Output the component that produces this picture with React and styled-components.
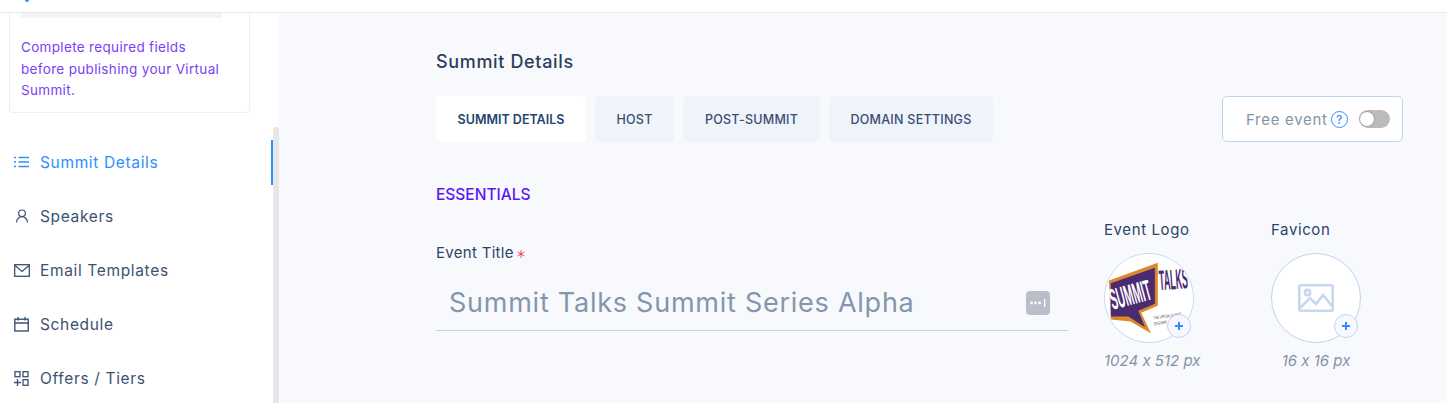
import React from 'react';
import styled, { createGlobalStyle } from 'styled-components';
import { UserRound, Asterisk } from 'lucide-react';

const GlobalStyle = createGlobalStyle`
    html, body {
        margin: 0;
        height: 403px;
        overflow: hidden;
        background: #f8f9fd;
        font-family: "Inter", "Noto Sans", sans-serif;
        font-feature-settings: "calt" 0;
    }
    * {
        box-sizing: border-box;
    }
`;

const ListIcon = () => (
    <svg width="16" height="12" viewBox="0 0 16 12" fill="none" stroke="currentColor" strokeWidth="1.3">
        <path d="M0 1.5h2M0 6h2M0 10.5h2" />
        <path d="M4.5 1.5H15M4.5 6H15M4.5 10.5H15" />
    </svg>
);

const MailIcon = () => (
    <svg width="16" height="13" viewBox="0 0 16 13" fill="none" stroke="currentColor" strokeWidth="1.3">
        <rect x="0.7" y="0.7" width="14.6" height="11.6" />
        <path d="M1 1.5l7 6 7-6" />
    </svg>
);

const CalendarIcon = () => (
    <svg width="15" height="15" viewBox="0 0 15 15" fill="none" stroke="currentColor" strokeWidth="1.4">
        <rect x="0.8" y="2.2" width="13.4" height="11.8" />
        <path d="M1 6h13M4 0v3.5M11 0v3.5" />
    </svg>
);

const OffersIcon = () => (
    <svg width="15" height="15" viewBox="0 0 15 15" fill="none" stroke="currentColor" strokeWidth="1.3">
        <rect x="1" y="0.7" width="5" height="5" />
        <rect x="9" y="0.7" width="5" height="5" />
        <rect x="9" y="8.7" width="5" height="5.6" />
        <path d="M3.5 8v7M0 11.5h7" />
    </svg>
);

const navItems = [
    { label: 'Summit Details', icon: <ListIcon />, active: true },
    { label: 'Speakers', icon: <UserRound size={16} strokeWidth={1.8} /> },
    { label: 'Email Templates', icon: <MailIcon /> },
    { label: 'Schedule', icon: <CalendarIcon /> },
    { label: 'Offers / Tiers', icon: <OffersIcon /> },
];

const tabs = [
    { label: 'SUMMIT DETAILS', width: 150, active: true },
    { label: 'HOST', width: 79 },
    { label: 'POST-SUMMIT', width: 137 },
    { label: 'DOMAIN SETTINGS', width: 164 },
];

const PlusBadge = () => (
    <Plus>
        <svg width="10" height="10" viewBox="0 0 10 10" stroke="#2e8fff" strokeWidth="2">
            <path d="M5 1v8M1 5h8" />
        </svg>
    </Plus>
);

const SummitLogo = () => (
    <svg width="90" height="90" viewBox="0 0 90 90" fontFamily="Liberation Sans">
        <rect width="90" height="90" fill="#fff" />
        <polygon points="4,27 54,9 54,53 37,60 47,81 26,69 6,67" fill="#d98a2b" />
        <polygon points="6,30 51,14 51,51 34,58 41,75 24,64 6,64" fill="#4a2a70" />
        <text fontWeight="700" fontSize="30" fill="#fff" transform="translate(8 57) rotate(-15) scale(0.36 1)">SUMMIT</text>
        <text fontWeight="700" fontSize="29" fill="#4a2a70" transform="translate(56 37) rotate(-4) scale(0.31 1)">TALKS</text>
        <text fontSize="4.5" fill="#444" transform="translate(50 67) rotate(-8) scale(0.6 1)">THE VIRTUAL SUMMIT</text>
        <text fontSize="4.5" fill="#444" transform="translate(50 73) rotate(-8) scale(0.6 1)">ON EVERY</text>
    </svg>
);

const App = () => {
    return (
        <Page>
            <GlobalStyle />
            <TopBar>
                <TopMark />
            </TopBar>
            <Body>
                <Sidebar>
                    <Notice>
                        <NoticeBar />
                        <NoticeText>Complete required fields before publishing your Virtual Summit.</NoticeText>
                    </Notice>
                    <Nav>
                        {navItems.map((item) => (
                            <NavItem key={item.label} $active={item.active}>
                                <NavIcon>{item.icon}</NavIcon>
                                {item.label}
                            </NavItem>
                        ))}
                    </Nav>
                    <ScrollThumb />
                    <ActiveMark />
                </Sidebar>
                <Main>
                    <Title>Summit Details</Title>
                    <TabRow>
                        <Tabs>
                            {tabs.map((tab) => (
                                <Tab key={tab.label} $active={tab.active} $width={tab.width}>{tab.label}</Tab>
                            ))}
                        </Tabs>
                        <FreeBox>
                            <FreeLabel>Free event</FreeLabel>
                            <Help>?</Help>
                            <Toggle />
                        </FreeBox>
                    </TabRow>
                    <Section>ESSENTIALS</Section>
                    <Fields>
                        <TitleField>
                            <FieldLabel>
                                Event Title
                                <Star><Asterisk size={14} strokeWidth={1.5} /></Star>
                            </FieldLabel>
                            <InputRow>
                                <InputText>Summit Talks Summit Series Alpha</InputText>
                                <DotsButton>
                                    <svg width="18" height="8" viewBox="0 0 18 8" fill="#fff">
                                        <circle cx="2.5" cy="4" r="1.4" />
                                        <circle cx="6.5" cy="4" r="1.4" />
                                        <circle cx="10.5" cy="4" r="1.4" />
                                        <rect x="15" y="0" width="1.4" height="8" />
                                    </svg>
                                </DotsButton>
                            </InputRow>
                        </TitleField>
                        <Upload $width={167}>
                            <UploadLabel>Event Logo</UploadLabel>
                            <Circle>
                                <CircleClip><SummitLogo /></CircleClip>
                                <PlusBadge />
                            </Circle>
                            <SizeHint $align="flex-start">1024 x 512 px</SizeHint>
                        </Upload>
                        <Upload $width={90}>
                            <UploadLabel>Favicon</UploadLabel>
                            <Circle>
                                <CircleClip>
                                    <svg width="36" height="28" viewBox="0 0 36 28" fill="none" stroke="#c5d8f0" strokeWidth="2.6">
                                        <rect x="1.3" y="1.3" width="33.4" height="25.4" rx="1" />
                                        <circle cx="9.5" cy="8.5" r="2.6" />
                                        <path d="M2 24l10-10 6 6 7-9 9 11" />
                                    </svg>
                                </CircleClip>
                                <PlusBadge />
                            </Circle>
                            <SizeHint $align="center">16 x 16 px</SizeHint>
                        </Upload>
                    </Fields>
                </Main>
            </Body>
        </Page>
    );
};

const Page = styled.div`
    height: 403px;
    overflow: hidden;
    display: flex;
    flex-direction: column;
`;

const TopBar = styled.div`
    position: relative;
    height: 13px;
    flex-shrink: 0;
    overflow: hidden;
    background: #fff;
    border-bottom: 1px solid #e1ebf7;
`;

const TopMark = styled.span`
    position: absolute;
    left: 25px;
    top: -4px;
    width: 4px;
    height: 6px;
    border-radius: 2px;
    background: #2e8fff;
`;

const Body = styled.div`
    flex: 1;
    display: flex;
    min-height: 0;
`;

const Sidebar = styled.aside`
    position: relative;
    width: 279px;
    flex-shrink: 0;
    background: #fff;
    padding-left: 9px;
`;

const Notice = styled.div`
    width: 241px;
    height: 100px;
    padding: 0 11px;
    background: #fff;
    border: 1px solid #eeeff2;
    border-top: 0;
    border-radius: 0 0 3px 3px;
`;

const NoticeBar = styled.div`
    width: 201px;
    height: 5px;
    background: #f4f4f5;
`;

const NoticeText = styled.p`
    margin: 19px 0 0;
    width: 205px;
    font-size: 13.5px;
    line-height: 21.5px;
    letter-spacing: 0.33px;
    color: #7a3ff5;
`;

const Nav = styled.nav`
    margin: 22px 0 0 -9px;
`;

const NavItem = styled.div`
    height: 54px;
    display: flex;
    align-items: center;
    padding-left: 13px;
    font-size: 15.5px;
    letter-spacing: 0.65px;
    color: ${(p) => (p.$active ? '#2e8fff' : '#3b5272')};
`;

const NavIcon = styled.span`
    width: 27px;
    padding-left: 1px;
    display: flex;
    align-items: center;
`;

const ScrollThumb = styled.div`
    position: absolute;
    top: 114px;
    right: 0;
    bottom: 0;
    width: 6px;
    border-radius: 3px 3px 0 0;
    background: #e6e6e6;
`;

const ActiveMark = styled.div`
    position: absolute;
    top: 127px;
    left: 271px;
    width: 2px;
    height: 45px;
    background: #2e8fff;
`;

const Main = styled.main`
    flex: 1;
    min-width: 0;
    padding: 38px 44px 0 157px;
`;

const Title = styled.h1`
    margin: 0;
    font-size: 18px;
    line-height: 22px;
    font-weight: 500;
    letter-spacing: 0.65px;
    color: #2c3e58;
`;

const TabRow = styled.div`
    margin-top: 23px;
    display: flex;
    justify-content: space-between;
`;

const Tabs = styled.div`
    display: flex;
    gap: 9px;
`;

const Tab = styled.div`
    width: ${(p) => p.$width}px;
    height: 46px;
    display: flex;
    align-items: center;
    justify-content: center;
    border-radius: 5px;
    font-size: 12.5px;
    font-weight: ${(p) => (p.$active ? 600 : 500)};
    letter-spacing: ${(p) => (p.$active ? '0' : '0.25px')};
    color: ${(p) => (p.$active ? '#24456f' : '#3a4d73')};
    background: ${(p) => (p.$active ? '#fff' : '#eff3fa')};
`;

const FreeBox = styled.div`
    width: 181px;
    height: 46px;
    display: flex;
    align-items: center;
    padding: 0 12px 0 23px;
    background: #fff;
    border: 1px solid #bcd4f0;
    border-radius: 5px;
`;

const FreeLabel = styled.span`
    font-size: 15px;
    letter-spacing: 0.7px;
    color: #8494a8;
`;

const Help = styled.span`
    width: 17px;
    height: 17px;
    margin-left: 3px;
    border: 1.5px solid #2e8fff;
    border-radius: 50%;
    display: flex;
    align-items: center;
    justify-content: center;
    font-size: 12px;
    font-weight: 500;
    color: #2e8fff;
`;

const Toggle = styled.span`
    position: relative;
    width: 31px;
    height: 18px;
    margin-left: auto;
    border-radius: 9px;
    background: #bbb;
    &::after {
        content: '';
        position: absolute;
        left: 1px;
        top: 2px;
        width: 14px;
        height: 14px;
        border-radius: 50%;
        background: #fff;
        box-shadow: 0 0 2px rgba(0, 0, 0, 0.4);
    }
`;

const Section = styled.h2`
    margin: 43px 0 0;
    font-size: 15.5px;
    line-height: 20px;
    font-weight: 500;
    color: #5b17f5;
`;

const Fields = styled.div`
    display: flex;
    margin-top: 15px;
`;

const TitleField = styled.div`
    width: 632px;
    margin-right: 36px;
    padding-top: 23px;
`;

const FieldLabel = styled.label`
    display: flex;
    align-items: center;
    font-size: 15px;
    line-height: 20px;
    letter-spacing: 0.3px;
    color: #2c4468;
`;

const Star = styled.span`
    display: flex;
    margin: 1px 0 0 0;
    color: #f0304a;
`;

const InputRow = styled.div`
    margin-top: 22px;
    height: 46px;
    padding: 0 18px 10px 13px;
    display: flex;
    align-items: center;
    justify-content: space-between;
    border-bottom: 1px solid #bcd4f0;
`;

const InputText = styled.span`
    font-size: 27px;
    letter-spacing: 0.75px;
    color: #8496ae;
`;

const DotsButton = styled.span`
    width: 24px;
    height: 24px;
    display: flex;
    align-items: center;
    justify-content: center;
    border-radius: 4px;
    background: #b8bfca;
`;

const Upload = styled.div`
    width: ${(p) => p.$width}px;
`;

const UploadLabel = styled.div`
    font-size: 15px;
    line-height: 20px;
    letter-spacing: 0.6px;
    color: #2c4468;
`;

const Circle = styled.div`
    position: relative;
    width: 90px;
    height: 90px;
    margin-top: 13px;
`;

const CircleClip = styled.div`
    width: 90px;
    height: 90px;
    display: flex;
    align-items: center;
    justify-content: center;
    overflow: hidden;
    background: #fff;
    border: 1px solid #bcd4f0;
    border-radius: 50%;
`;

const Plus = styled.span`
    position: absolute;
    right: 3px;
    bottom: 5px;
    width: 24px;
    height: 24px;
    display: flex;
    align-items: center;
    justify-content: center;
    border-radius: 50%;
    background: #f8f7ff;
    border: 1px solid #bcd4f0;
`;

const SizeHint = styled.div`
    width: 90px;
    margin-top: 8px;
    font-size: 15px;
    line-height: 20px;
    font-style: italic;
    white-space: nowrap;
    color: #8494a8;
    display: flex;
    justify-content: ${(p) => p.$align};
`;

export default App;
